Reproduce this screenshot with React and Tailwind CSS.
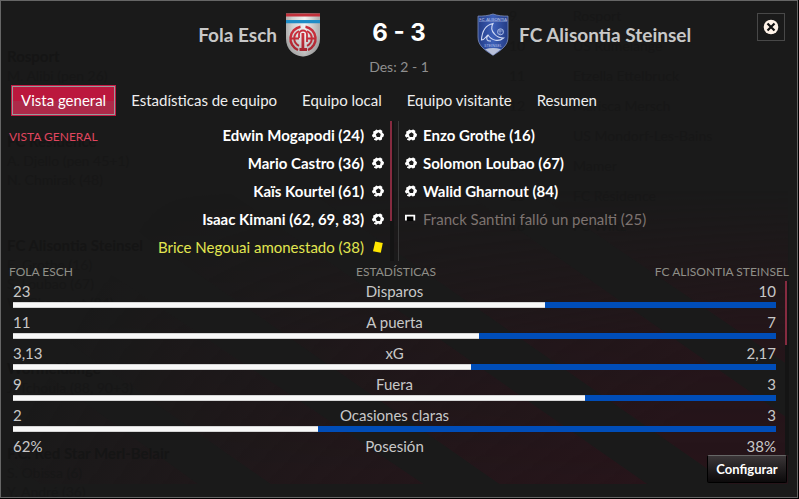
const tabs = ['Vista general', 'Estadísticas de equipo', 'Equipo local', 'Equipo visitante', 'Resumen'];

const homeEvents = [
  { text: 'Edwin Mogapodi (24)', kind: 'goal' },
  { text: 'Mario Castro (36)', kind: 'goal' },
  { text: 'Kaïs Kourtel (61)', kind: 'goal' },
  { text: 'Isaac Kimani (62, 69, 83)', kind: 'goal' },
  { text: 'Brice Negouai amonestado (38)', kind: 'card' },
];

const awayEvents = [
  { text: 'Enzo Grothe (16)', kind: 'goal' },
  { text: 'Solomon Loubao (67)', kind: 'goal' },
  { text: 'Walid Gharnout (84)', kind: 'goal' },
  { text: 'Franck Santini falló un penalti (25)', kind: 'miss' },
];

const stats = [
  { name: 'Disparos', home: '23', away: '10', share: 69.7 },
  { name: 'A puerta', home: '11', away: '7', share: 61.1 },
  { name: 'xG', home: '3,13', away: '2,17', share: 60 },
  { name: 'Fuera', home: '9', away: '3', share: 75 },
  { name: 'Ocasiones claras', home: '2', away: '3', share: 40 },
  { name: 'Posesión', home: '62%', away: '38%' },
];

// The results and the league table of the page under the dialog
const otherResults = [
  ['Rosport', 'M. Alibi (pen 26)'],
  ['FC Résidence', 'A. Djello (pen 45+1)', 'N. Chmirak (48)'],
  ['FC Alisontia Steinsel', 'E. Grothe (16)', 'S. Loubao (67)', 'W. Gharnout (84)'],
  ['Wormeldange', 'J. Tchoula (88, 90+3)'],
  ['F.C. Red Star Merl-Belair', 'S. Obissa (6)', 'Y. André (36)'],
];

const leagueTable = [
  ['9', 'Rosport'],
  ['10', 'US Rumelange'],
  ['11', 'Etzella Ettelbruck'],
  ['12', 'Marisca Mersch'],
  ['13', 'US Mondorf-Les-Bains'],
  ['14', 'Mamer'],
  ['15', 'FC Résidence'],
  ['16', 'FC Wiltz'],
];

const textStyle = {
  goal: 'font-bold text-white',
  card: 'text-[#e2e650]',
  miss: 'text-[#7d7370]',
};

function Underlay() {
  return (
    <div className="absolute inset-0 grid grid-cols-[1fr_288px] overflow-hidden text-sm text-[#171717]" aria-hidden="true">
      <div className="flex flex-col gap-[47px] pt-[46px] pl-1.5">
        {otherResults.map(([club, ...scorers]) => (
          <div key={club} className="leading-[19px]">
            <p className="text-[15px] leading-[19px] font-bold text-[#151515]">{club}</p>
            {scorers.map((s) => <p key={s}>{s}</p>)}
          </div>
        ))}
      </div>
      <ul>
        {leagueTable.map(([place, club]) => (
          <li key={place} className="flex h-[30px] items-center">
            <span className="w-16">{place}</span>
            <span>{club}</span>
          </li>
        ))}
      </ul>
    </div>
  );
}

// Diagonal club stripes that fade in towards the lower right corner
function Stripes() {
  return (
    <svg className="absolute inset-0 h-full w-full" viewBox="0 0 797 497" preserveAspectRatio="none" aria-hidden="true">
      <defs>
        <linearGradient id="fade" gradientUnits="userSpaceOnUse" x1="150" y1="200" x2="640" y2="485">
          <stop offset="0" stopColor="#28141a" stopOpacity="0" />
          <stop offset="0.5" stopColor="#28141a" stopOpacity="0.5" />
          <stop offset="1" stopColor="#28141a" stopOpacity="0.9" />
        </linearGradient>
        <linearGradient id="rise" x1="0" x2="0" y1="0" y2="1">
          <stop offset="0" stopColor="#000" />
          <stop offset="0.5" stopColor="#ccc" />
          <stop offset="1" stopColor="#fff" />
        </linearGradient>
        <mask id="panel" maskUnits="userSpaceOnUse" x="0" y="0" width="797" height="497">
          <rect x="8" y="190" width="780" height="294" fill="url(#rise)" />
        </mask>
      </defs>
      <g fill="url(#fade)" mask="url(#panel)">
        <path d="M-365 190H-211L197 484H40Z" />
        <path d="M-149 190H-15L423 484H270Z" />
        <path d="M78 190H226L647 484H499Z" />
        <path d="M308 190H462L882 484H729Z" />
        <path d="M532 190H796V370Z" />
      </g>
    </svg>
  );
}

function Ball() {
  return (
    <svg className="size-3 shrink-0" viewBox="0 0 12 12" aria-hidden="true">
      <path
        d="M4.2.5 6 1.2 8.200.4 10.300 1.800 10.200 3.600 12 5.200 11.600 7.400 10.300 8.200 9.800 10.700 7.800 11.600 6.200 10.600 4.400 11.800 2 10.800 2 9 .3 7.600 0 6 1.300 4.700 1.200 2.400 3 1.800Z"
        fill="#fff"
      />
      <path d="M6.400 3.300 8.700 4.900 8 7.900H4.800L3.800 5.200Z" fill="#1a1a1a" />
      <path d="M1.800 7.900 3.400 8.300 3.200 9.800 2 9.600Z" fill="#1a1a1a" />
    </svg>
  );
}

function EventIcon({ kind }) {
  if (kind === 'goal') return <Ball />;
  if (kind === 'card') {
    return (
      <svg className="size-3 shrink-0" viewBox="0 0 12 12" aria-hidden="true">
        <path d="M3.200.5 10.800 2 8.800 11.800 1 10.300Z" fill="#ffe600" />
      </svg>
    );
  }
  return (
    <svg className="size-3 shrink-0" viewBox="0 0 12 12" aria-hidden="true">
      <path d="M2 3H9V8H2Z" fill="#000" />
      <path d="M.9 7.500V2.700H9.300V7.500" fill="none" stroke="#fff" strokeWidth="1.800" />
    </svg>
  );
}

function FolaCrest() {
  return (
    <svg className="h-11 w-9 shrink-0" viewBox="0 0 36 44" role="img" aria-label="Escudo de Fola Esch">
      <defs>
        <linearGradient id="silver" x1="0" x2="1">
          <stop offset="0" stopColor="#a9a9a9" />
          <stop offset="0.2" stopColor="#d0d0d0" />
          <stop offset="0.55" stopColor="#f2f2f2" />
          <stop offset="1" stopColor="#a8a8a8" />
        </linearGradient>
        <linearGradient id="shade" x1="0" x2="0" y1="0" y2="1">
          <stop offset="0.5" stopColor="#000" stopOpacity="0" />
          <stop offset="1" stopColor="#000" stopOpacity="0.25" />
        </linearGradient>
        <clipPath id="folaShape">
          <path d="M1 .5H35V26C35 36 27 43.400 18 43.400S1 36 1 26Z" />
        </clipPath>
      </defs>
      <g clipPath="url(#folaShape)">
        <path d="M0 0H36V44H0Z" fill="url(#silver)" />
        <path d="M0 0H36V3.400H0Z" fill="#c2303b" />
        <path d="M0 7H36V10.200H0Z" fill="#1f8cc6" />
        <g fill="none" stroke="#c92f3b">
          <path d="M15.500 13.700A12.200 12.200 0 0 0 13 37M20.500 13.700A12.200 12.200 0 0 1 23 37" strokeWidth="2.400" />
          <path d="M14 18.200A8 8 0 0 0 14 32.800M22 18.200A8 8 0 0 1 22 32.800" strokeWidth="2" />
          <path d="M6 25.500H14M22 25.500H30" strokeWidth="2" />
          <path d="M14 25V21.500A4 4 0 0 1 22 21.500V29" strokeWidth="1.800" />
        </g>
        <path d="M16.500 20H19.300V35H22V38H14.500V35H16.500Z" fill="#c92f3b" />
        <path d="M0 0H36V44H0Z" fill="url(#shade)" />
      </g>
    </svg>
  );
}

function AlisontiaCrest() {
  return (
    <svg className="h-11 w-8 shrink-0" viewBox="0 0 32 44" role="img" aria-label="Escudo de FC Alisontia Steinsel">
      <defs>
        <linearGradient id="blue" x1="0" x2="1">
          <stop offset="0" stopColor="#233c86" />
          <stop offset="0.5" stopColor="#3d5fb8" />
          <stop offset="1" stopColor="#233b84" />
        </linearGradient>
      </defs>
      <path d="M16 1C20.500 2.700 26 3.200 31 3.100V24C31 32.500 25 36.500 16 42.300 7 36.500 1 32.500 1 24V3.100C6 3.200 11.500 2.700 16 1Z" fill="url(#blue)" stroke="#7f8fbc" strokeWidth="0.800" />
      <path d="M8 36.200Q16 34 24 36.200L16 42.300Z" fill="#b9c1da" />
      <path d="M2 8.500H30" stroke="#6f83c0" strokeWidth="0.800" />
      <text x="16" y="7.500" textAnchor="middle" fontFamily="Lato, sans-serif" fontSize="4" fill="#cbd5f0">F.C. ALISONTIA</text>
      <path d="M4.500 27C5 18 9 12 16 10.500 14 14 14.500 18 17.500 21 20 24 24 25 26.500 25 22 29 15 28 11 22 9 23 8 27 4.500 27ZM11 22C8.500 26 10 28.500 14 28" fill="none" stroke="#d3dcf5" strokeWidth="1.100" />
      <circle cx="23.500" cy="18.800" r="3" fill="none" stroke="#a9b8e3" />
      <path d="M21 18H26M23 16V22" stroke="#a9b8e3" strokeWidth="0.700" />
      <text x="16" y="34" textAnchor="middle" fontFamily="Lato, sans-serif" fontSize="4" fill="#aebce4">STEINSEL</text>
    </svg>
  );
}

function EventRow({ event, side }) {
  return (
    <li className={`flex h-7 items-center ${side === 'home' ? 'flex-row-reverse gap-2' : 'gap-1.5'}`}>
      <EventIcon kind={event.kind} />
      <span className={textStyle[event.kind]}>{event.text}</span>
    </li>
  );
}

function StatRow({ stat }) {
  return (
    <li>
      <div className="grid h-[19px] grid-cols-[1fr_auto_1fr] items-center">
        <span>{stat.home}</span>
        <span>{stat.name}</span>
        <span className="text-right">{stat.away}</span>
      </div>
      {stat.share !== undefined && (
        <div className="mt-0.5 mb-1 flex h-1.5 bg-[#004db8]">
          <div className="border-y border-[#d5d5d5] bg-[#f8f8f8]" style={{ width: `${stat.share}%` }} />
        </div>
      )}
    </li>
  );
}

export default function App() {
  return (
    <div className="bg-black pr-px pb-px font-['Lato',sans-serif] text-[15px] leading-5 text-[#c8c8c8]">
      <main className="relative border border-[#666] bg-[#1a1a1a]">
        <Stripes />
        <Underlay />
        <div className="relative flex flex-col pb-[14px]">
          <header className="grid grid-cols-[1fr_156px_1fr] pt-3">
            <div className="flex h-11 items-center justify-end gap-2">
              <h2 className="text-[19px] font-bold">Fola Esch</h2>
              <FolaCrest />
            </div>
            <div className="flex flex-col items-center">
              <h1 className="flex h-10 items-center font-['Inter',sans-serif] text-2xl font-bold text-white">6 - 3</h1>
              <p className="mt-1 text-sm leading-5 text-[#8f8f8f]">Des: 2 - 1</p>
            </div>
            <div className="flex h-11 items-center gap-2.5 pr-3">
              <AlisontiaCrest />
              <h2 className="text-[19px] font-bold whitespace-nowrap">FC Alisontia Steinsel</h2>
              <button type="button" aria-label="Cerrar" className="mb-4 ml-auto flex size-7 items-center justify-center border border-[#484848]">
                <svg className="size-4" viewBox="0 0 16 16" aria-hidden="true">
                  <circle cx="8" cy="8" r="7.300" fill="#fff3e8" />
                  <path d="M4.500 4.500 11.500 11.500M11.500 4.500 4.500 11.500" stroke="#111" strokeWidth="2.200" />
                </svg>
              </button>
            </div>
          </header>

          <nav className="mt-2 flex gap-[5px] pl-2.5 text-[#eee]">
            {tabs.map((tab, i) => (
              <button
                key={tab}
                type="button"
                className={i === 0
                  ? 'h-[31px] border border-[#c51a45] bg-linear-to-b from-[#bb173d] from-50% to-[#ad2a49] to-50% px-[9px] pb-0.5 text-white outline outline-offset-[-2px] outline-[#999]'
                  : 'h-[31px] px-2.5 pb-0.5'}
              >
                {tab}
              </button>
            ))}
          </nav>

          <section className="mt-[5px] grid grid-cols-2">
            <div className="flex border-r border-[#3a3a3a]">
              <h3 className="pt-1.5 pl-2 text-xs leading-5 text-[#e0465f]">VISTA GENERAL</h3>
              <ul className="ml-auto">
                {homeEvents.map((e) => <EventRow key={e.text} event={e} side="home" />)}
              </ul>
              <div className="mr-1 ml-1.5 w-1 bg-[#141414]">
                <div className="h-[100px] w-0.5 bg-[#862b40]" />
              </div>
            </div>
            <ul className="pl-1.5">
              {awayEvents.map((e) => <EventRow key={e.text} event={e} side="away" />)}
            </ul>
          </section>

          <section className="pr-2 pl-2">
            <div className="grid h-5 grid-cols-[1fr_auto_1fr] items-center pt-0.5 text-xs text-[#8f8f88]">
              <h3>FOLA ESCH</h3>
              <h3 className="pr-1.5">ESTADÍSTICAS</h3>
              <h3 className="text-right">FC ALISONTIA STEINSEL</h3>
            </div>
            <div className="flex">
              <ul className="grow pr-[9px] pl-1">
                {stats.map((s) => <StatRow key={s.name} stat={s} />)}
              </ul>
              <div className="w-1 bg-[#141414]">
                <div className="h-16 w-0.5 bg-[#862b40]" />
              </div>
            </div>
          </section>

          <button
            type="button"
            className="mr-2.5 h-7 w-20 self-end rounded-xs border border-black border-t-[#666] bg-linear-to-b from-[#3b3638] to-[#0c0a0b] text-[13px] font-bold text-white"
          >
            Configurar
          </button>
        </div>
      </main>
    </div>
  );
}
